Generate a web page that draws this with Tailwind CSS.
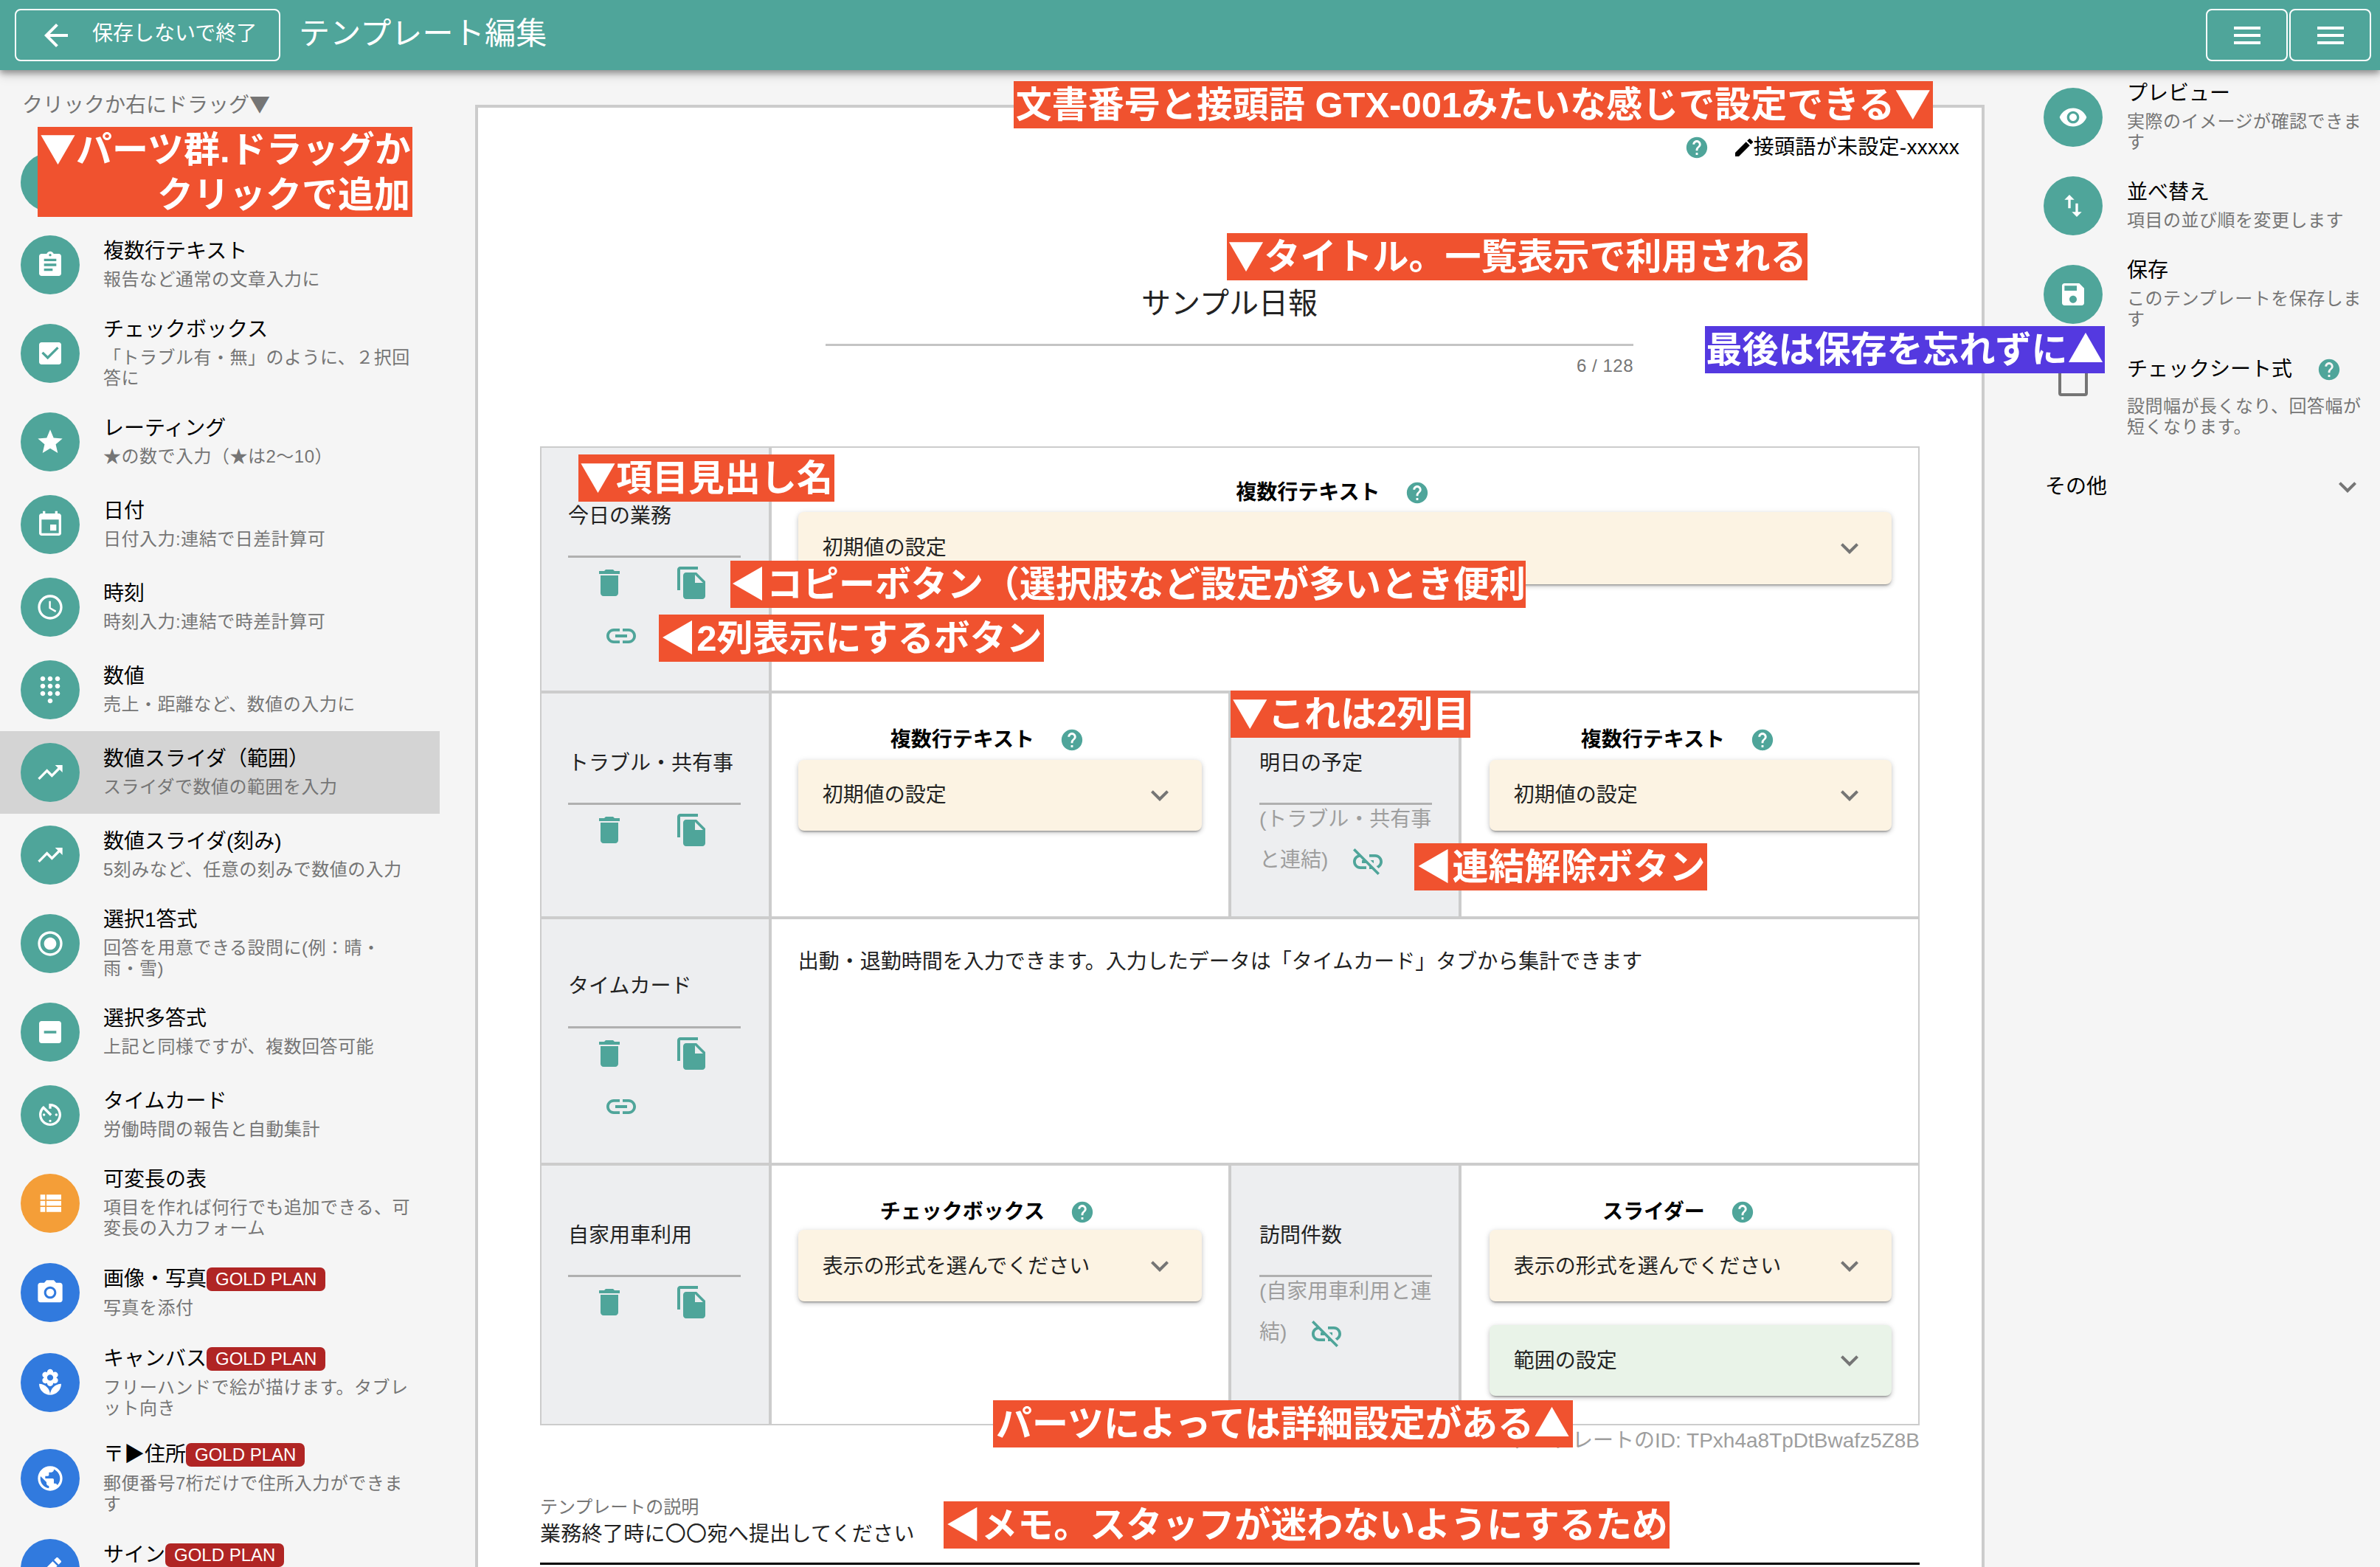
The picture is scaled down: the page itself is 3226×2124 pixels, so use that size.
<!DOCTYPE html>
<html lang="ja">
<head>
  <meta charset="UTF-8" />
  <title>テンプレート編集</title>
  <script src="https://cdn.jsdelivr.net/npm/@tailwindcss/browser@4"></script>
</head>
<body class="bg-[#f5f5f5] text-black [font-family:'Liberation_Sans','Noto_Sans_CJK_JP',sans-serif]">

  <!-- Material icons -->
  <svg class="hidden">
    <symbol id="i-back" viewBox="0 0 24 24"><path d="M20 11H7.83l5.59-5.59L12 4l-8 8 8 8 1.41-1.41L7.83 13H20v-2z"/></symbol>
    <symbol id="i-menu" viewBox="0 0 24 24"><path d="M3 18h18v-2H3v2zm0-5h18v-2H3v2zm0-7v2h18V6H3z"/></symbol>
    <symbol id="i-assign" viewBox="0 0 24 24"><path d="M19 3h-4.18C14.4 1.84 13.3 1 12 1c-1.3 0-2.4.84-2.82 2H5c-1.1 0-2 .9-2 2v14c0 1.1.9 2 2 2h14c1.1 0 2-.9 2-2V5c0-1.1-.9-2-2-2zm-7 0c.55 0 1 .45 1 1s-.45 1-1 1-1-.45-1-1 .45-1 1-1zm2 14H7v-2h7v2zm3-4H7v-2h10v2zm0-4H7V7h10v2z"/></symbol>
    <symbol id="i-check" viewBox="0 0 24 24"><path d="M19 3H5c-1.11 0-2 .9-2 2v14c0 1.1.89 2 2 2h14c1.11 0 2-.9 2-2V5c0-1.1-.89-2-2-2zm-9 14l-5-5 1.41-1.41L10 14.17l7.59-7.59L19 8l-9 9z"/></symbol>
    <symbol id="i-star" viewBox="0 0 24 24"><path d="M12 17.27L18.18 21l-1.64-7.03L22 9.24l-7.19-.61L12 2 9.19 8.63 2 9.24l5.46 4.73L5.82 21z"/></symbol>
    <symbol id="i-event" viewBox="0 0 24 24"><path d="M17 12h-5v5h5v-5zM16 1v2H8V1H6v2H5c-1.11 0-1.99.9-1.99 2L3 19c0 1.1.89 2 2 2h14c1.1 0 2-.9 2-2V5c0-1.1-.9-2-2-2h-1V1h-2zm3 18H5V8h14v11z"/></symbol>
    <symbol id="i-time" viewBox="0 0 24 24"><path d="M11.99 2C6.47 2 2 6.48 2 12s4.47 10 9.99 10C17.52 22 22 17.52 22 12S17.52 2 11.99 2zM12 20c-4.42 0-8-3.58-8-8s3.58-8 8-8 8 3.58 8 8-3.58 8-8 8zm.5-13H11v6l5.25 3.15.75-1.23-4.5-2.67z"/></symbol>
    <symbol id="i-dial" viewBox="0 0 24 24"><path d="M12 19c-1.1 0-2 .9-2 2s.9 2 2 2 2-.9 2-2-.9-2-2-2zM6 1c-1.1 0-2 .9-2 2s.9 2 2 2 2-.9 2-2-.9-2-2-2zm0 6c-1.1 0-2 .9-2 2s.9 2 2 2 2-.9 2-2-.9-2-2-2zm0 6c-1.1 0-2 .9-2 2s.9 2 2 2 2-.9 2-2-.9-2-2-2zm12-8c1.1 0 2-.9 2-2s-.9-2-2-2-2 .9-2 2 .9 2 2 2zm-6 8c-1.1 0-2 .9-2 2s.9 2 2 2 2-.9 2-2-.9-2-2-2zm6 0c-1.1 0-2 .9-2 2s.9 2 2 2 2-.9 2-2-.9-2-2-2zm0-6c-1.1 0-2 .9-2 2s.9 2 2 2 2-.9 2-2-.9-2-2-2zm-6 0c-1.1 0-2 .9-2 2s.9 2 2 2 2-.9 2-2-.9-2-2-2zm0-6c-1.1 0-2 .9-2 2s.9 2 2 2 2-.9 2-2-.9-2-2-2z"/></symbol>
    <symbol id="i-trend" viewBox="0 0 24 24"><path d="M16 6l2.29 2.29-4.88 4.88-4-4L2 16.59 3.41 18l6-6 4 4 6.3-6.29L22 12V6z"/></symbol>
    <symbol id="i-radio" viewBox="0 0 24 24"><path d="M12 7c-2.76 0-5 2.24-5 5s2.24 5 5 5 5-2.24 5-5-2.24-5-5-5zm0-5C6.48 2 2 6.48 2 12s4.48 10 10 10 10-4.48 10-10S17.52 2 12 2zm0 18c-4.42 0-8-3.58-8-8s3.58-8 8-8 8 3.58 8 8-3.58 8-8 8z"/></symbol>
    <symbol id="i-minus" viewBox="0 0 24 24"><path d="M19 3H5c-1.1 0-2 .9-2 2v14c0 1.1.9 2 2 2h14c1.1 0 2-.9 2-2V5c0-1.1-.9-2-2-2zm-2 10H7v-2h10v2z"/></symbol>
    <symbol id="i-timer" viewBox="0 0 24 24"><path d="M11 17c0 .55.45 1 1 1s1-.45 1-1-.45-1-1-1-1 .45-1 1zm0-14v4h2V5.08c3.39.49 6 3.39 6 6.92 0 3.87-3.13 7-7 7s-7-3.13-7-7c0-1.68.59-3.22 1.58-4.42L12 13l1.41-1.41-6.8-6.8v.02C4.42 6.45 3 9.05 3 12c0 4.97 4.02 9 9 9 4.97 0 9-4.03 9-9s-4.03-9-9-9h-1zm7 9c0-.55-.45-1-1-1s-1 .45-1 1 .45 1 1 1 1-.45 1-1zM6 12c0 .55.45 1 1 1s1-.45 1-1-.45-1-1-1-1 .45-1 1z"/></symbol>
    <symbol id="i-list" viewBox="0 0 24 24"><path d="M4 14h4v-4H4v4zm0 5h4v-4H4v4zM4 9h4V5H4v4zm5 5h12v-4H9v4zm0 5h12v-4H9v4zM9 5v4h12V5H9z"/></symbol>
    <symbol id="i-camera" viewBox="0 0 24 24"><circle cx="12" cy="12" r="3.2"/><path d="M9 2L7.17 4H4c-1.1 0-2 .9-2 2v12c0 1.1.9 2 2 2h16c1.1 0 2-.9 2-2V6c0-1.1-.9-2-2-2h-3.17L15 2H9zm3 15c-2.76 0-5-2.24-5-5s2.24-5 5-5 5 2.24 5 5-2.24 5-5 5z"/></symbol>
    <symbol id="i-flower" viewBox="0 0 24 24"><path d="M12 22c4.97 0 9-4.03 9-9-4.97 0-9 4.03-9 9zM5.6 10.25c0 1.38 1.12 2.5 2.5 2.5.53 0 1.01-.16 1.42-.44l-.02.19c0 1.38 1.12 2.5 2.5 2.5s2.5-1.12 2.5-2.5l-.02-.19c.4.28.89.44 1.42.44 1.38 0 2.5-1.12 2.5-2.5 0-1-.59-1.85-1.43-2.25.84-.4 1.43-1.25 1.43-2.25 0-1.38-1.12-2.5-2.5-2.5-.53 0-1.01.16-1.42.44l.02-.19C14.5 2.12 13.38 1 12 1S9.5 2.12 9.5 3.5l.02.19c-.4-.28-.89-.44-1.42-.44-1.38 0-2.5 1.12-2.5 2.5 0 1 .59 1.85 1.43 2.25-.84.4-1.43 1.25-1.43 2.25zM12 5.5c1.38 0 2.5 1.12 2.5 2.5s-1.12 2.5-2.5 2.5S9.5 9.38 9.5 8s1.12-2.5 2.5-2.5zM3 13c0 4.97 4.03 9 9 9 0-4.97-4.03-9-9-9z"/></symbol>
    <symbol id="i-public" viewBox="0 0 24 24"><path d="M12 2C6.48 2 2 6.48 2 12s4.48 10 10 10 10-4.48 10-10S17.52 2 12 2zm-1 17.93c-3.95-.49-7-3.85-7-7.93 0-.62.08-1.21.21-1.79L9 15v1c0 1.1.9 2 2 2v1.93zm6.9-2.54c-.26-.81-1-1.39-1.9-1.39h-1v-3c0-.55-.45-1-1-1H8v-2h2c.55 0 1-.45 1-1V7h2c1.1 0 2-.9 2-2v-.41c2.93 1.19 5 4.06 5 7.41 0 2.08-.8 3.97-2.1 5.39z"/></symbol>
    <symbol id="i-edit" viewBox="0 0 24 24"><path d="M3 17.25V21h3.75L17.81 9.94l-3.75-3.75L3 17.25zM20.71 7.04c.39-.39.39-1.02 0-1.41l-2.34-2.34c-.39-.39-1.02-.39-1.41 0l-1.83 1.83 3.75 3.75 1.83-1.83z"/></symbol>
    <symbol id="i-eye" viewBox="0 0 24 24"><path d="M12 4.5C7 4.5 2.73 7.61 1 12c1.73 4.39 6 7.5 11 7.5s9.27-3.11 11-7.5c-1.73-4.39-6-7.5-11-7.5zM12 17c-2.76 0-5-2.24-5-5s2.24-5 5-5 5 2.24 5 5-2.24 5-5 5zm0-8c-1.66 0-3 1.34-3 3s1.34 3 3 3 3-1.34 3-3-1.34-3-3-3z"/></symbol>
    <symbol id="i-swap" viewBox="0 0 24 24"><path d="M16 17.01V10h-2v7.01h-3L15 21l4-3.99h-3zM9 3L5 6.99h3V14h2V6.99h3L9 3z"/></symbol>
    <symbol id="i-save" viewBox="0 0 24 24"><path d="M17 3H5c-1.11 0-2 .9-2 2v14c0 1.1.89 2 2 2h14c1.1 0 2-.9 2-2V7l-4-4zm-5 16c-1.66 0-3-1.34-3-3s1.34-3 3-3 3 1.34 3 3-1.34 3-3 3zm3-10H5V5h10v4z"/></symbol>
    <symbol id="i-help" viewBox="0 0 24 24"><path d="M12 2C6.48 2 2 6.48 2 12s4.48 10 10 10 10-4.48 10-10S17.52 2 12 2zm1 17h-2v-2h2v2zm2.07-7.75l-.9.92C13.45 12.9 13 13.5 13 15h-2v-.5c0-1.1.45-2.1 1.17-2.83l1.24-1.26c.37-.36.59-.86.59-1.41 0-1.1-.9-2-2-2s-2 .9-2 2H8c0-2.21 1.79-4 4-4s4 1.79 4 4c0 .88-.36 1.68-.93 2.25z"/></symbol>
    <symbol id="i-trash" viewBox="0 0 24 24"><path d="M6 19c0 1.1.9 2 2 2h8c1.1 0 2-.9 2-2V7H6v12zM19 4h-3.5l-1-1h-5l-1 1H5v2h14V4z"/></symbol>
    <symbol id="i-copy" viewBox="0 0 24 24"><path d="M16 1H4c-1.1 0-2 .9-2 2v14h2V3h12V1zm-1 4l6 6v10c0 1.1-.9 2-2 2H7.99C6.89 23 6 22.1 6 21l.01-14c0-1.1.89-2 1.99-2h7zm-1 7h5.5L14 6.5V12z"/></symbol>
    <symbol id="i-link" viewBox="0 0 24 24"><path d="M3.9 12c0-1.71 1.39-3.1 3.1-3.1h4V7H7c-2.76 0-5 2.24-5 5s2.24 5 5 5h4v-1.9H7c-1.71 0-3.1-1.39-3.1-3.1zM8 13h8v-2H8v2zm9-6h-4v1.9h4c1.71 0 3.1 1.39 3.1 3.1s-1.39 3.1-3.1 3.1h-4V17h4c2.76 0 5-2.24 5-5s-2.24-5-5-5z"/></symbol>
    <symbol id="i-unlink" viewBox="0 0 24 24"><path d="M17 7h-4v1.9h4c1.71 0 3.1 1.39 3.1 3.1 0 1.43-.98 2.63-2.31 2.98l1.46 1.46C20.88 15.61 22 13.95 22 12c0-2.76-2.24-5-5-5zm-1 4h-2.19l2 2H16zM2 4.27l3.11 3.11C3.29 8.12 2 9.91 2 12c0 2.76 2.24 5 5 5h4v-1.9H7c-1.71 0-3.1-1.39-3.1-3.1 0-1.59 1.21-2.9 2.76-3.07L8.73 11H8v2h2.73L13 15.27V17h1.73l4.01 4L20 19.74 3.27 3 2 4.27z"/></symbol>
    <symbol id="i-down" viewBox="0 0 24 24"><path d="M7.41 8.59L12 13.17l4.59-4.58L18 10l-6 6-6-6 1.41-1.41z"/></symbol>
  </svg>

  <div class="relative w-[3226px] h-[2124px] overflow-hidden">

    <!-- Barra superior -->
    <header class="relative z-10 flex items-center h-[95px] bg-[#4fa59a] text-white shadow-[0_4px_8px_rgba(0,0,0,0.35),0_8px_14px_rgba(0,0,0,0.12)]">
      <button class="flex items-center ml-[20px] w-[360px] h-[71px] pl-[30px] border-2 border-white rounded-[8px]">
        <svg class="w-[48px] h-[48px] fill-current"><use href="#i-back"/></svg>
        <span class="ml-[25px] text-[28px] -mt-[4px]">保存しないで終了</span>
      </button>
      <h1 class="ml-[25px] text-[42px] tracking-[0.2px] -mt-[5px]">テンプレート編集</h1>
      <div class="ml-auto mr-[12px] flex gap-[2px]">
        <button class="flex items-center justify-center w-[111px] h-[71px] border-2 border-white rounded-[8px]"><svg class="w-[48px] h-[48px] fill-current"><use href="#i-menu"/></svg></button>
        <button class="flex items-center justify-center w-[111px] h-[71px] border-2 border-white rounded-[8px]"><svg class="w-[48px] h-[48px] fill-current"><use href="#i-menu"/></svg></button>
      </div>
    </header>

    <div class="flex h-[2029px]">

      <!-- Parts list -->
      <aside class="w-[596px] shrink-0">
        <p class="pl-[30px] pt-[25px] mb-[28px] text-[28px] leading-[40px] text-[#757575]">クリックか右にドラッグ<span class="[font-family:'Noto_Sans_CJK_JP']">▼</span></p>

        <div class="flex items-center min-h-[112px] py-[16px] pl-[28px]">
          <span class="flex items-center justify-center w-[80px] h-[80px] rounded-full bg-[#4fa59a] text-white shrink-0"><svg class="w-[40px] h-[40px] fill-current"><use href="#i-assign"/></svg></span>
          <div class="ml-[32px] whitespace-nowrap"><p class="text-[28px] leading-[32px]">1行テキスト</p><p class="mt-[8px] text-[24px] tracking-[0.5px] leading-[28px] text-[#757575]">短い文章の入力に</p></div>
        </div>
        <div class="flex items-center min-h-[112px] py-[16px] pl-[28px]">
          <span class="flex items-center justify-center w-[80px] h-[80px] rounded-full bg-[#4fa59a] text-white shrink-0"><svg class="w-[40px] h-[40px] fill-current"><use href="#i-assign"/></svg></span>
          <div class="ml-[32px] whitespace-nowrap"><p class="text-[28px] leading-[32px]">複数行テキスト</p><p class="mt-[8px] text-[24px] tracking-[0.5px] leading-[28px] text-[#757575]">報告など通常の文章入力に</p></div>
        </div>
        <div class="flex items-center min-h-[112px] py-[16px] pl-[28px]">
          <span class="flex items-center justify-center w-[80px] h-[80px] rounded-full bg-[#4fa59a] text-white shrink-0"><svg class="w-[40px] h-[40px] fill-current"><use href="#i-check"/></svg></span>
          <div class="ml-[32px] whitespace-nowrap"><p class="text-[28px] leading-[32px]">チェックボックス</p><p class="mt-[8px] text-[24px] tracking-[0.5px] leading-[28px] text-[#757575]">「トラブル有・無」のように、２択回<br>答に</p></div>
        </div>
        <div class="flex items-center min-h-[112px] py-[16px] pl-[28px]">
          <span class="flex items-center justify-center w-[80px] h-[80px] rounded-full bg-[#4fa59a] text-white shrink-0"><svg class="w-[40px] h-[40px] fill-current"><use href="#i-star"/></svg></span>
          <div class="ml-[32px] whitespace-nowrap"><p class="text-[28px] leading-[32px]">レーティング</p><p class="mt-[8px] text-[24px] tracking-[0.5px] leading-[28px] text-[#757575]">★の数で入力（★は2〜10）</p></div>
        </div>
        <div class="flex items-center min-h-[112px] py-[16px] pl-[28px]">
          <span class="flex items-center justify-center w-[80px] h-[80px] rounded-full bg-[#4fa59a] text-white shrink-0"><svg class="w-[40px] h-[40px] fill-current"><use href="#i-event"/></svg></span>
          <div class="ml-[32px] whitespace-nowrap"><p class="text-[28px] leading-[32px]">日付</p><p class="mt-[8px] text-[24px] tracking-[0.5px] leading-[28px] text-[#757575]">日付入力:連結で日差計算可</p></div>
        </div>
        <div class="flex items-center min-h-[112px] py-[16px] pl-[28px]">
          <span class="flex items-center justify-center w-[80px] h-[80px] rounded-full bg-[#4fa59a] text-white shrink-0"><svg class="w-[40px] h-[40px] fill-current"><use href="#i-time"/></svg></span>
          <div class="ml-[32px] whitespace-nowrap"><p class="text-[28px] leading-[32px]">時刻</p><p class="mt-[8px] text-[24px] tracking-[0.5px] leading-[28px] text-[#757575]">時刻入力:連結で時差計算可</p></div>
        </div>
        <div class="flex items-center min-h-[112px] py-[16px] pl-[28px]">
          <span class="flex items-center justify-center w-[80px] h-[80px] rounded-full bg-[#4fa59a] text-white shrink-0"><svg class="w-[40px] h-[40px] fill-current"><use href="#i-dial"/></svg></span>
          <div class="ml-[32px] whitespace-nowrap"><p class="text-[28px] leading-[32px]">数値</p><p class="mt-[8px] text-[24px] tracking-[0.5px] leading-[28px] text-[#757575]">売上・距離など、数値の入力に</p></div>
        </div>
        <div class="flex items-center min-h-[112px] py-[16px] pl-[28px] bg-[#d4d4d4]">
          <span class="flex items-center justify-center w-[80px] h-[80px] rounded-full bg-[#4fa59a] text-white shrink-0"><svg class="w-[40px] h-[40px] fill-current"><use href="#i-trend"/></svg></span>
          <div class="ml-[32px] whitespace-nowrap"><p class="text-[28px] leading-[32px]">数値スライダ（範囲）</p><p class="mt-[8px] text-[24px] tracking-[0.5px] leading-[28px] text-[#757575]">スライダで数値の範囲を入力</p></div>
        </div>
        <div class="flex items-center min-h-[112px] py-[16px] pl-[28px]">
          <span class="flex items-center justify-center w-[80px] h-[80px] rounded-full bg-[#4fa59a] text-white shrink-0"><svg class="w-[40px] h-[40px] fill-current"><use href="#i-trend"/></svg></span>
          <div class="ml-[32px] whitespace-nowrap"><p class="text-[28px] leading-[32px]">数値スライダ(刻み)</p><p class="mt-[8px] text-[24px] tracking-[0.5px] leading-[28px] text-[#757575]">5刻みなど、任意の刻みで数値の入力</p></div>
        </div>
        <div class="flex items-center min-h-[112px] py-[16px] pl-[28px]">
          <span class="flex items-center justify-center w-[80px] h-[80px] rounded-full bg-[#4fa59a] text-white shrink-0"><svg class="w-[40px] h-[40px] fill-current"><use href="#i-radio"/></svg></span>
          <div class="ml-[32px] whitespace-nowrap"><p class="text-[28px] leading-[32px]">選択1答式</p><p class="mt-[8px] text-[24px] tracking-[0.5px] leading-[28px] text-[#757575]">回答を用意できる設問に(例：晴・<br>雨・雪)</p></div>
        </div>
        <div class="flex items-center min-h-[112px] py-[16px] pl-[28px]">
          <span class="flex items-center justify-center w-[80px] h-[80px] rounded-full bg-[#4fa59a] text-white shrink-0"><svg class="w-[40px] h-[40px] fill-current"><use href="#i-minus"/></svg></span>
          <div class="ml-[32px] whitespace-nowrap"><p class="text-[28px] leading-[32px]">選択多答式</p><p class="mt-[8px] text-[24px] tracking-[0.5px] leading-[28px] text-[#757575]">上記と同様ですが、複数回答可能</p></div>
        </div>
        <div class="flex items-center min-h-[112px] py-[16px] pl-[28px]">
          <span class="flex items-center justify-center w-[80px] h-[80px] rounded-full bg-[#4fa59a] text-white shrink-0"><svg class="w-[40px] h-[40px] fill-current"><use href="#i-timer"/></svg></span>
          <div class="ml-[32px] whitespace-nowrap"><p class="text-[28px] leading-[32px]">タイムカード</p><p class="mt-[8px] text-[24px] tracking-[0.5px] leading-[28px] text-[#757575]">労働時間の報告と自動集計</p></div>
        </div>
        <div class="flex items-center min-h-[112px] py-[16px] pl-[28px]">
          <span class="flex items-center justify-center w-[80px] h-[80px] rounded-full bg-[#f49e38] text-white shrink-0"><svg class="w-[40px] h-[40px] fill-current"><use href="#i-list"/></svg></span>
          <div class="ml-[32px] whitespace-nowrap"><p class="text-[28px] leading-[32px]">可変長の表</p><p class="mt-[8px] text-[24px] tracking-[0.5px] leading-[28px] text-[#757575]">項目を作れば何行でも追加できる、可<br>変長の入力フォーム</p></div>
        </div>
        <div class="flex items-center min-h-[114px] py-[16px] pl-[28px]">
          <span class="flex items-center justify-center w-[80px] h-[80px] rounded-full bg-[#317ade] text-white shrink-0"><svg class="w-[40px] h-[40px] fill-current"><use href="#i-camera"/></svg></span>
          <div class="ml-[32px] whitespace-nowrap"><p class="flex items-center text-[28px] leading-[34px]">画像・写真<span class="px-[12px] h-[32px] rounded-[7px] bg-[#b02524] text-white text-[24px] leading-[32px]">GOLD PLAN</span></p><p class="mt-[8px] text-[24px] tracking-[0.5px] leading-[28px] text-[#757575]">写真を添付</p></div>
        </div>
        <div class="flex items-center min-h-[114px] py-[16px] pl-[28px]">
          <span class="flex items-center justify-center w-[80px] h-[80px] rounded-full bg-[#317ade] text-white shrink-0"><svg class="w-[40px] h-[40px] fill-current"><use href="#i-flower"/></svg></span>
          <div class="ml-[32px] whitespace-nowrap"><p class="flex items-center text-[28px] leading-[34px]">キャンバス<span class="px-[12px] h-[32px] rounded-[7px] bg-[#b02524] text-white text-[24px] leading-[32px]">GOLD PLAN</span></p><p class="mt-[8px] text-[24px] tracking-[0.5px] leading-[28px] text-[#757575]">フリーハンドで絵が描けます。タブレ<br>ット向き</p></div>
        </div>
        <div class="flex items-center min-h-[114px] py-[16px] pl-[28px]">
          <span class="flex items-center justify-center w-[80px] h-[80px] rounded-full bg-[#317ade] text-white shrink-0"><svg class="w-[40px] h-[40px] fill-current"><use href="#i-public"/></svg></span>
          <div class="ml-[32px] whitespace-nowrap"><p class="flex items-center text-[28px] leading-[34px]">〒▶住所<span class="px-[12px] h-[32px] rounded-[7px] bg-[#b02524] text-white text-[24px] leading-[32px]">GOLD PLAN</span></p><p class="mt-[8px] text-[24px] tracking-[0.5px] leading-[28px] text-[#757575]">郵便番号7桁だけで住所入力ができま<br>す</p></div>
        </div>
        <div class="flex items-center min-h-[114px] py-[16px] pl-[28px]">
          <span class="flex items-center justify-center w-[80px] h-[80px] rounded-full bg-[#317ade] text-white shrink-0"><svg class="w-[40px] h-[40px] fill-current"><use href="#i-edit"/></svg></span>
          <div class="ml-[32px] whitespace-nowrap"><p class="flex items-center text-[28px] leading-[34px]">サイン<span class="px-[12px] h-[32px] rounded-[7px] bg-[#b02524] text-white text-[24px] leading-[32px]">GOLD PLAN</span></p><div class="mt-[8px] h-[28px]"></div></div>
        </div>
      </aside>

      <!-- Template sheet -->
      <main class="ml-[48px] mt-[47px] w-[2046px] shrink-0 px-[84px] bg-white border-x-4 border-t-4 border-[#cccccc]">
        <div class="flex items-center justify-end h-[36px] mt-[36px] -mr-[54px]">
          <svg class="w-[34px] h-[34px] fill-[#4fa59a]"><use href="#i-help"/></svg>
          <svg class="ml-[31px] -mr-[3px] w-[32px] h-[32px] fill-black"><use href="#i-edit"/></svg>
          <span class="text-[28px] tracking-[0.3px]">接頭語が未設定-xxxxx</span>
        </div>

        <div class="ml-[387px] mr-[388px] mt-[165px]">
          <div class="pb-[27px] border-b-[3px] border-[#c4c4c4] text-center text-[40px] leading-[56px] text-[#222222]">サンプル日報</div>
          <p class="mt-[11px] text-right text-[24px] tracking-[0.5px] leading-[32px] text-[#757575]">6 / 128</p>
        </div>

        <!-- Linhas -->
        <div class="mt-[93px] w-[1870px]">

          <div class="grid grid-cols-12 h-[333px]">
            <div class="col-span-2 border-2 border-[#cccccc] bg-[#edeef0] pl-[36px] pr-[38px] pt-[73px]">
              <div class="pb-[33px] border-b-[3px] border-[#b0b0b0] text-[28px] leading-[40px] text-[#222222]">今日の業務</div>
              <div class="flex mt-[10px] ml-[32px] gap-[64px] text-[#4fa59a]"><svg class="w-[48px] h-[48px] fill-current"><use href="#i-trash"/></svg><svg class="w-[48px] h-[48px] fill-current"><use href="#i-copy"/></svg></div>
              <svg class="mt-[24px] ml-[48px] w-[48px] h-[48px] fill-[#4fa59a]"><use href="#i-link"/></svg>
            </div>
            <div class="col-span-10 border-2 border-[#cccccc] px-[36px] pt-[41px]">
              <div class="flex items-center justify-center pr-[32px] h-[40px]"><span class="text-[28px] font-bold">複数行テキスト</span><svg class="ml-[34px] w-[34px] h-[34px] fill-[#4fa59a]"><use href="#i-help"/></svg></div>
              <div class="flex items-center justify-between mt-[6px] h-[98px] pl-[33px] pr-[33px] rounded-[8px] bg-[#fcf3e3] shadow-[0_3px_3px_-2px_rgba(0,0,0,0.4),0_3px_6px_0_rgba(0,0,0,0.14),0_1px_8px_0_rgba(0,0,0,0.1)]"><span class="text-[28px] text-[#222222]">初期値の設定</span><svg class="w-[48px] h-[48px] fill-[#757575]"><use href="#i-down"/></svg></div>
            </div>
          </div>

          <div class="grid grid-cols-12 h-[306px]">
            <div class="col-span-2 border-2 border-[#cccccc] bg-[#edeef0] pl-[36px] pr-[38px] pt-[75px]">
              <div class="pb-[33px] border-b-[3px] border-[#b0b0b0] text-[28px] leading-[40px] text-[#222222]">トラブル・共有事</div>
              <div class="flex mt-[10px] ml-[32px] gap-[64px] text-[#4fa59a]"><svg class="w-[48px] h-[48px] fill-current"><use href="#i-trash"/></svg><svg class="w-[48px] h-[48px] fill-current"><use href="#i-copy"/></svg></div>
            </div>
            <div class="col-span-4 border-2 border-[#cccccc] px-[36px] pt-[43px]">
              <div class="flex items-center justify-center pr-[34px] h-[40px]"><span class="text-[28px] font-bold">複数行テキスト</span><svg class="ml-[34px] w-[34px] h-[34px] fill-[#4fa59a]"><use href="#i-help"/></svg></div>
              <div class="flex items-center justify-between mt-[7px] h-[96px] pl-[33px] pr-[33px] rounded-[8px] bg-[#fcf3e3] shadow-[0_3px_3px_-2px_rgba(0,0,0,0.4),0_3px_6px_0_rgba(0,0,0,0.14),0_1px_8px_0_rgba(0,0,0,0.1)]"><span class="text-[28px] text-[#222222]">初期値の設定</span><svg class="w-[48px] h-[48px] fill-[#757575]"><use href="#i-down"/></svg></div>
            </div>
            <div class="col-span-2 border-2 border-[#cccccc] bg-[#edeef0] pl-[38px] pr-[36px] pt-[75px]">
              <div class="pb-[33px] border-b-[3px] border-[#b0b0b0] text-[28px] leading-[40px] text-[#222222]">明日の予定</div>
              <div class="-mt-[8px] text-[28px] leading-[55px] text-[#9e9e9e] whitespace-nowrap">(トラブル・共有事<br>と連結)<svg class="inline-block align-middle ml-[30px] w-[48px] h-[48px] fill-[#4fa59a]"><use href="#i-unlink"/></svg></div>
            </div>
            <div class="col-span-4 border-2 border-[#cccccc] pl-[38px] pr-[36px] pt-[43px]">
              <div class="flex items-center justify-center pr-[34px] h-[40px]"><span class="text-[28px] font-bold">複数行テキスト</span><svg class="ml-[34px] w-[34px] h-[34px] fill-[#4fa59a]"><use href="#i-help"/></svg></div>
              <div class="flex items-center justify-between mt-[7px] h-[96px] pl-[33px] pr-[33px] rounded-[8px] bg-[#fcf3e3] shadow-[0_3px_3px_-2px_rgba(0,0,0,0.4),0_3px_6px_0_rgba(0,0,0,0.14),0_1px_8px_0_rgba(0,0,0,0.1)]"><span class="text-[28px] text-[#222222]">初期値の設定</span><svg class="w-[48px] h-[48px] fill-[#757575]"><use href="#i-down"/></svg></div>
            </div>
          </div>

          <div class="grid grid-cols-12 h-[334px]">
            <div class="col-span-2 border-2 border-[#cccccc] bg-[#edeef0] pl-[36px] pr-[38px] pt-[71px]">
              <div class="pb-[34px] border-b-[3px] border-[#b0b0b0] text-[28px] leading-[40px] text-[#222222]">タイムカード</div>
              <div class="flex mt-[10px] ml-[32px] gap-[64px] text-[#4fa59a]"><svg class="w-[48px] h-[48px] fill-current"><use href="#i-trash"/></svg><svg class="w-[48px] h-[48px] fill-current"><use href="#i-copy"/></svg></div>
              <svg class="mt-[24px] ml-[48px] w-[48px] h-[48px] fill-[#4fa59a]"><use href="#i-link"/></svg>
            </div>
            <div class="col-span-10 border-2 border-[#cccccc] px-[36px] pt-[38px]">
              <p class="text-[28px] leading-[40px] text-[#222222]">出動・退勤時間を入力できます。入力したデータは「タイムカード」タブから集計できます</p>
            </div>
          </div>

          <div class="grid grid-cols-12 h-[354px]">
            <div class="col-span-2 border-2 border-[#cccccc] bg-[#edeef0] pl-[36px] pr-[38px] pt-[75px]">
              <div class="pb-[33px] border-b-[3px] border-[#b0b0b0] text-[28px] leading-[40px] text-[#222222]">自家用車利用</div>
              <div class="flex mt-[10px] ml-[32px] gap-[64px] text-[#4fa59a]"><svg class="w-[48px] h-[48px] fill-current"><use href="#i-trash"/></svg><svg class="w-[48px] h-[48px] fill-current"><use href="#i-copy"/></svg></div>
            </div>
            <div class="col-span-4 border-2 border-[#cccccc] px-[36px] pt-[43px]">
              <div class="flex items-center justify-center pr-[34px] h-[40px]"><span class="text-[28px] font-bold">チェックボックス</span><svg class="ml-[34px] w-[34px] h-[34px] fill-[#4fa59a]"><use href="#i-help"/></svg></div>
              <div class="flex items-center justify-between mt-[4px] h-[97px] pl-[33px] pr-[33px] rounded-[8px] bg-[#fcf3e3] shadow-[0_3px_3px_-2px_rgba(0,0,0,0.4),0_3px_6px_0_rgba(0,0,0,0.14),0_1px_8px_0_rgba(0,0,0,0.1)]"><span class="mt-[2px] text-[28px] text-[#222222]">表示の形式を選んでください</span><svg class="w-[48px] h-[48px] fill-[#757575]"><use href="#i-down"/></svg></div>
            </div>
            <div class="col-span-2 border-2 border-[#cccccc] bg-[#edeef0] pl-[38px] pr-[36px] pt-[75px]">
              <div class="pb-[33px] border-b-[3px] border-[#b0b0b0] text-[28px] leading-[40px] text-[#222222]">訪問件数</div>
              <div class="-mt-[8px] text-[28px] leading-[55px] text-[#9e9e9e] whitespace-nowrap">(自家用車利用と連<br>結)<svg class="inline-block align-middle ml-[30px] w-[48px] h-[48px] fill-[#4fa59a]"><use href="#i-unlink"/></svg></div>
            </div>
            <div class="col-span-4 border-2 border-[#cccccc] pl-[38px] pr-[36px] pt-[43px]">
              <div class="flex items-center justify-center pr-[32px] h-[40px]"><span class="text-[28px] font-bold">スライダー</span><svg class="ml-[34px] w-[34px] h-[34px] fill-[#4fa59a]"><use href="#i-help"/></svg></div>
              <div class="flex items-center justify-between mt-[4px] h-[97px] pl-[33px] pr-[33px] rounded-[8px] bg-[#fcf3e3] shadow-[0_3px_3px_-2px_rgba(0,0,0,0.4),0_3px_6px_0_rgba(0,0,0,0.14),0_1px_8px_0_rgba(0,0,0,0.1)]"><span class="mt-[2px] text-[28px] text-[#222222]">表示の形式を選んでください</span><svg class="w-[48px] h-[48px] fill-[#757575]"><use href="#i-down"/></svg></div>
              <div class="flex items-center justify-between mt-[32px] h-[96px] pl-[33px] pr-[33px] rounded-[8px] bg-[#e9f3e8] shadow-[0_3px_3px_-2px_rgba(0,0,0,0.4),0_3px_6px_0_rgba(0,0,0,0.14),0_1px_8px_0_rgba(0,0,0,0.1)]"><span class="mt-[2px] text-[28px] text-[#222222]">範囲の設定</span><svg class="w-[48px] h-[48px] fill-[#757575]"><use href="#i-down"/></svg></div>
            </div>
          </div>
        </div>

        <p class="mt-px text-right text-[28px] leading-[40px] text-[#9e9e9e]">テンプレートのID: TPxh4a8TpDtBwafz5Z8B</p>

        <div class="mt-[54px] pb-[18px] border-b-[3px] border-black">
          <p class="text-[24px] leading-[32px] text-[#757575]">テンプレートの説明</p>
          <p class="mt-px text-[28px] tracking-[0.3px] leading-[40px] text-[#222222]">業務終了時に〇〇宛へ提出してください</p>
        </div>
      </main>

      <!-- Actions -->
      <aside class="ml-[54px] flex-1">
        <div class="flex items-center min-h-[112px] py-[16px] pl-[26px]">
          <span class="flex items-center justify-center w-[80px] h-[80px] rounded-full bg-[#4fa59a] text-white shrink-0"><svg class="w-[40px] h-[40px] fill-current"><use href="#i-eye"/></svg></span>
          <div class="ml-[33px] whitespace-nowrap"><p class="text-[28px] leading-[32px]">プレビュー</p><p class="mt-[8px] text-[24px] tracking-[0.5px] leading-[28px] text-[#757575]">実際のイメージが確認できま<br>す</p></div>
        </div>
        <div class="flex items-center min-h-[112px] py-[16px] pl-[26px]">
          <span class="flex items-center justify-center w-[80px] h-[80px] rounded-full bg-[#4fa59a] text-white shrink-0"><svg class="w-[40px] h-[40px] fill-current"><use href="#i-swap"/></svg></span>
          <div class="ml-[33px] whitespace-nowrap"><p class="text-[28px] leading-[32px]">並べ替え</p><p class="mt-[8px] text-[24px] tracking-[0.5px] leading-[28px] text-[#757575]">項目の並び順を変更します</p></div>
        </div>
        <div class="flex items-center min-h-[112px] py-[16px] pl-[26px]">
          <span class="flex items-center justify-center w-[80px] h-[80px] rounded-full bg-[#4fa59a] text-white shrink-0"><svg class="w-[40px] h-[40px] fill-current"><use href="#i-save"/></svg></span>
          <div class="ml-[33px] whitespace-nowrap"><p class="text-[28px] leading-[32px]">保存</p><p class="mt-[8px] text-[24px] tracking-[0.5px] leading-[28px] text-[#757575]">このテンプレートを保存しま<br>す</p></div>
        </div>
        <div class="flex pl-[46px] pt-[16px]">
          <span class="mt-[18px] w-[40px] h-[40px] border-4 border-[#757575] rounded-[4px] shrink-0"></span>
          <div class="ml-[53px] whitespace-nowrap">
            <div class="flex items-center h-[44px]"><span class="text-[28px]">チェックシート式</span><svg class="ml-[33px] w-[34px] h-[34px] fill-[#4fa59a]"><use href="#i-help"/></svg></div>
            <p class="mt-[14px] text-[24px] tracking-[0.5px] leading-[28px] text-[#757575]">設問幅が長くなり、回答幅が<br>短くなります。</p>
          </div>
        </div>
        <div class="flex items-center justify-between mt-[43px] pl-[28px] pr-[20px]">
          <span class="text-[28px] leading-[40px]">その他</span>
          <svg class="w-[48px] h-[48px] fill-[#757575]"><use href="#i-down"/></svg>
        </div>
      </aside>
    </div>

    <!-- Annotation labels drawn over the screenshot -->
    <div class="absolute left-[51px] top-[172px] w-[508px] h-[122px] px-[3px] bg-[#f0522f] text-white font-bold text-[49px] leading-[61px] text-right whitespace-nowrap"><div class="-mt-[4px]"><span class="[font-family:'Noto_Sans_CJK_JP']">▼</span>パーツ群.ドラッグか<br>クリックで追加</div></div>
    <div class="absolute left-[1374px] top-[110px] w-[1246px] h-[64px] pb-[3px] flex items-center justify-center bg-[#f0522f] text-white font-bold text-[49px] whitespace-nowrap"><span>文書番号と接頭語 GTX-001みたいな感じで設定できる<span class="[font-family:'Noto_Sans_CJK_JP']">▼</span></span></div>
    <div class="absolute left-[1663px] top-[316px] w-[787px] h-[64px] pb-[3px] flex items-center justify-center bg-[#f0522f] text-white font-bold text-[49px] whitespace-nowrap"><span><span class="[font-family:'Noto_Sans_CJK_JP']">▼</span>タイトル。一覧表示で利用される</span></div>
    <div class="absolute left-[2311px] top-[442px] w-[542px] h-[64px] pb-[3px] flex items-center justify-center bg-[#5439e0] text-white font-bold text-[49px] whitespace-nowrap"><span>最後は保存を忘れずに<span class="[font-family:'Noto_Sans_CJK_JP']">▲</span></span></div>
    <div class="absolute left-[784px] top-[616px] w-[347px] h-[64px] pb-[3px] flex items-center justify-center bg-[#f0522f] text-white font-bold text-[49px] whitespace-nowrap"><span><span class="[font-family:'Noto_Sans_CJK_JP']">▼</span>項目見出し名</span></div>
    <div class="absolute left-[990px] top-[760px] w-[1078px] h-[64px] pb-[3px] flex items-center justify-center bg-[#f0522f] text-white font-bold text-[49px] whitespace-nowrap"><span><span class="[font-family:'Noto_Sans_CJK_JP']">◀</span>コピーボタン（選択肢など設定が多いとき便利</span></div>
    <div class="absolute left-[893px] top-[833px] w-[522px] h-[64px] pb-[3px] flex items-center justify-center bg-[#f0522f] text-white font-bold text-[49px] whitespace-nowrap"><span><span class="[font-family:'Noto_Sans_CJK_JP']">◀</span>2列表示にするボタン</span></div>
    <div class="absolute left-[1668px] top-[936px] w-[325px] h-[64px] pb-[3px] flex items-center justify-center bg-[#f0522f] text-white font-bold text-[49px] whitespace-nowrap"><span><span class="[font-family:'Noto_Sans_CJK_JP']">▼</span>これは2列目</span></div>
    <div class="absolute left-[1917px] top-[1143px] w-[397px] h-[64px] pb-[3px] flex items-center justify-center bg-[#f0522f] text-white font-bold text-[49px] whitespace-nowrap"><span><span class="[font-family:'Noto_Sans_CJK_JP']">◀</span>連結解除ボタン</span></div>
    <div class="absolute left-[1346px] top-[1898px] w-[786px] h-[64px] pb-[3px] flex items-center justify-center bg-[#f0522f] text-white font-bold text-[49px] whitespace-nowrap"><span>パーツによっては詳細設定がある<span class="[font-family:'Noto_Sans_CJK_JP']">▲</span></span></div>
    <div class="absolute left-[1279px] top-[2035px] w-[984px] h-[64px] pb-[3px] flex items-center justify-center bg-[#f0522f] text-white font-bold text-[49px] whitespace-nowrap"><span><span class="[font-family:'Noto_Sans_CJK_JP']">◀</span>メモ。スタッフが迷わないようにするため</span></div>
  </div>
</body>
</html>
